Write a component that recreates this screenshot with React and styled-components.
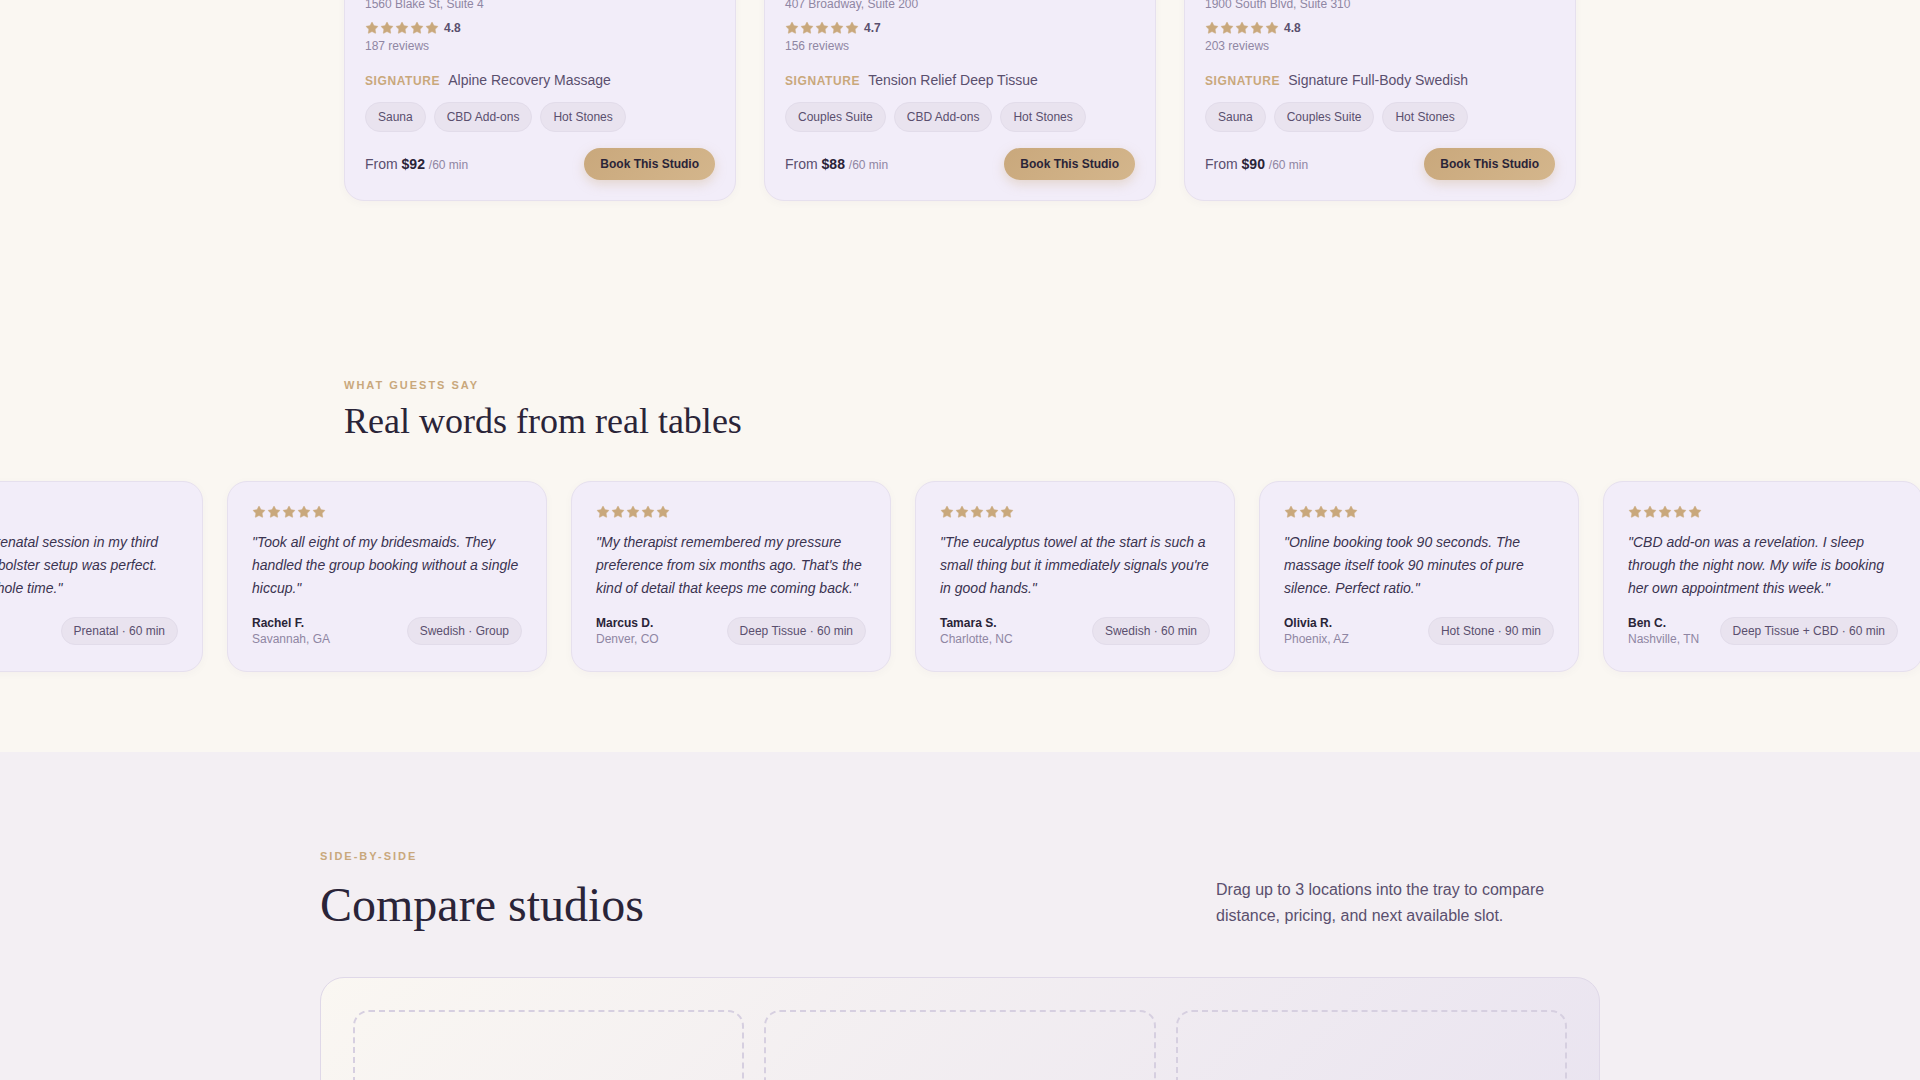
import React from 'react'
import styled, { createGlobalStyle } from 'styled-components'
import { Star } from 'lucide-react'

const GlobalStyle = createGlobalStyle`
    * {
        box-sizing: border-box;
    }

    html, body {
        margin: 0;
        padding: 0;
        background: #faf7f2;
        overflow: hidden;
    }

    body {
        font-family: "Liberation Sans", Arial, sans-serif;
        color: #2a2438;
    }
`

const Page = styled.div`
    height: 1080px;
    overflow: hidden;
`

const StudiosSection = styled.section`
    padding-bottom: 177px;
`

const StudioGrid = styled.div`
    width: 1232px;
    margin: -25px auto 0;
    display: grid;
    grid-template-columns: repeat(3, 392px);
    gap: 28px;
`

const StudioCard = styled.article`
    background: #f2edf9;
    border: 1px solid #e6e0ee;
    border-radius: 20px;
    padding: 20px;
    box-shadow: 0 2px 10px rgba(60, 40, 90, 0.03);
`

const Address = styled.div`
    font-size: 12px;
    line-height: 16px;
    color: #8f86a3;
`

const RatingRow = styled.div`
    display: flex;
    align-items: center;
    gap: 5px;
    margin-top: 8px;
    height: 16px;
`

const StarRow = styled.span`
    display: flex;
    align-items: center;
    gap: 1px;
    height: ${props => props.$height || 14}px;
    color: #c9a87c;

    svg {
        flex: none;
        fill: currentColor;
    }
`

const RatingValue = styled.span`
    font-size: 12px;
    font-weight: 700;
    color: #5a4f6e;
`

const ReviewCount = styled.div`
    font-size: 12px;
    line-height: 14px;
    margin-top: 3px;
    color: #8f86a3;
`

const SignatureRow = styled.div`
    display: flex;
    align-items: baseline;
    gap: 8px;
    margin-top: 19px;
`

const SignatureTag = styled.span`
    font-size: 12px;
    font-weight: 700;
    letter-spacing: 0.6px;
    color: #c9a87c;
`

const SignatureName = styled.span`
    font-size: 14px;
    color: #5a4f6e;
`

const TagRow = styled.div`
    display: flex;
    gap: 8px;
    margin-top: 14px;
`

const Chip = styled.span`
    display: inline-flex;
    align-items: center;
    height: ${props => props.$height || 30}px;
    padding: 0 12px;
    background: #e9e3ef;
    border: 1px solid #e2dcea;
    border-radius: 999px;
    font-size: 12px;
    color: #5a4f6e;
    white-space: nowrap;
`

const CardFooter = styled.div`
    display: flex;
    align-items: center;
    justify-content: space-between;
    margin-top: 16px;
`

const Price = styled.div`
    font-size: 14px;
    color: #5a4f6e;

    strong {
        color: #2a2438;
        font-weight: 700;
    }

    small {
        font-size: 12px;
        color: #8f86a3;
    }
`

const BookButton = styled.button`
    height: 32px;
    padding: 0 16px;
    border: none;
    border-radius: 999px;
    background: linear-gradient(135deg, #c9a87c, #d4b68c);
    box-shadow: 0 4px 12px rgba(201, 168, 124, 0.35);
    font-family: inherit;
    font-size: 12px;
    font-weight: 700;
    color: #2a2438;
`

const SectionHead = styled.div`
    width: 1232px;
    margin: 0 auto 38px;
`

const Eyebrow = styled.div`
    font-size: 11px;
    line-height: 14px;
    font-weight: 700;
    letter-spacing: 2px;
    text-transform: uppercase;
    color: #c9a87c;
`

const Heading = styled.h2`
    margin: 8px 0 0;
    font-family: "Liberation Serif", "Times New Roman", serif;
    font-weight: 400;
    font-size: 36px;
    line-height: 1.2;
    color: #2a2438;
`

const TestimonialSection = styled.section`
    padding-bottom: 80px;
    overflow: hidden;
`

const Track = styled.div`
    display: flex;
    gap: 24px;
    width: max-content;
    transform: translateX(-117px);
`

const QuoteCard = styled.article`
    flex: none;
    width: 320px;
    background: #f2edf9;
    border: 1px solid #e6e0ee;
    border-radius: 20px;
    padding: 24px;
    box-shadow: 0 2px 10px rgba(60, 40, 90, 0.03);
`

const Quote = styled.p`
    margin: 13px 0 15px;
    font-size: 14px;
    line-height: 23px;
    font-style: italic;
    color: #3a3350;
`

const QuoteFooter = styled.div`
    display: flex;
    align-items: center;
    justify-content: space-between;
    gap: 8px;
`

const Guest = styled.div`
    font-size: 12px;
    line-height: 16px;
    color: #8f86a3;
    white-space: nowrap;

    strong {
        display: block;
        color: #2a2438;
        font-weight: 700;
    }
`

const CompareSection = styled.section`
    background: #f3eff3;
    padding: 97px 0 80px;
`

const CompareHead = styled.div`
    width: 1280px;
    margin: 0 auto 43px;
    display: flex;
    align-items: flex-end;
    justify-content: space-between;
`

const CompareHeading = styled(Heading)`
    font-size: 48px;
    margin-top: 13px;
`

const CompareIntro = styled.p`
    margin: 0 0 5px;
    width: 384px;
    font-size: 16px;
    line-height: 26px;
    color: #5a4f6e;
`

const Tray = styled.div`
    width: 1280px;
    margin: 0 auto;
    display: grid;
    grid-template-columns: repeat(3, 1fr);
    gap: 20px;
    padding: 32px;
    background: linear-gradient(135deg, #faf7f2, #e8e2f0);
    border: 1px solid #dfd8e8;
    border-radius: 24px;
`

const TraySlot = styled.div`
    height: 220px;
    border: 2px dashed #d6cfe0;
    border-radius: 16px;
`

const studios = [
    { address: '1560 Blake St, Suite 4', rating: '4.8', reviews: 187, signature: 'Alpine Recovery Massage', tags: ['Sauna', 'CBD Add-ons', 'Hot Stones'], price: 92 },
    { address: '407 Broadway, Suite 200', rating: '4.7', reviews: 156, signature: 'Tension Relief Deep Tissue', tags: ['Couples Suite', 'CBD Add-ons', 'Hot Stones'], price: 88 },
    { address: '1900 South Blvd, Suite 310', rating: '4.8', reviews: 203, signature: 'Signature Full-Body Swedish', tags: ['Sauna', 'Couples Suite', 'Hot Stones'], price: 90 },
]

const quotes = [
    { text: '"Booked the prenatal session in my third trimester. The bolster setup was perfect. Relaxed the whole time."', name: 'Hannah L.', place: 'Austin, TX', service: 'Prenatal · 60 min' },
    { text: '"Took all eight of my bridesmaids. They handled the group booking without a single hiccup."', name: 'Rachel F.', place: 'Savannah, GA', service: 'Swedish · Group' },
    { text: '"My therapist remembered my pressure preference from six months ago. That\'s the kind of detail that keeps me coming back."', name: 'Marcus D.', place: 'Denver, CO', service: 'Deep Tissue · 60 min' },
    { text: '"The eucalyptus towel at the start is such a small thing but it immediately signals you\'re in good hands."', name: 'Tamara S.', place: 'Charlotte, NC', service: 'Swedish · 60 min' },
    { text: '"Online booking took 90 seconds. The massage itself took 90 minutes of pure silence. Perfect ratio."', name: 'Olivia R.', place: 'Phoenix, AZ', service: 'Hot Stone · 90 min' },
    { text: '"CBD add-on was a revelation. I sleep through the night now. My wife is booking her own appointment this week."', name: 'Ben C.', place: 'Nashville, TN', service: 'Deep Tissue + CBD · 60 min' },
]

function FiveStars({ height }) {
    return (
        <StarRow $height={height}>
            {[1, 2, 3, 4, 5].map(n => <Star key={n} size={14} strokeWidth={0.8} />)}
        </StarRow>
    )
}

export default function App() {
    return (
        <Page>
            <GlobalStyle />
            <StudiosSection>
                <StudioGrid>
                    {studios.map(studio => (
                        <StudioCard key={studio.address}>
                            <Address>{studio.address}</Address>
                            <RatingRow>
                                <FiveStars />
                                <RatingValue>{studio.rating}</RatingValue>
                            </RatingRow>
                            <ReviewCount>{studio.reviews} reviews</ReviewCount>
                            <SignatureRow>
                                <SignatureTag>SIGNATURE</SignatureTag>
                                <SignatureName>{studio.signature}</SignatureName>
                            </SignatureRow>
                            <TagRow>
                                {studio.tags.map(tag => <Chip key={tag}>{tag}</Chip>)}
                            </TagRow>
                            <CardFooter>
                                <Price>From <strong>${studio.price}</strong> <small>/60 min</small></Price>
                                <BookButton>Book This Studio</BookButton>
                            </CardFooter>
                        </StudioCard>
                    ))}
                </StudioGrid>
            </StudiosSection>

            <TestimonialSection>
                <SectionHead>
                    <Eyebrow>What guests say</Eyebrow>
                    <Heading>Real words from real tables</Heading>
                </SectionHead>
                <Track>
                    {quotes.map(quote => (
                        <QuoteCard key={quote.name}>
                            <FiveStars height={12} />
                            <Quote>{quote.text}</Quote>
                            <QuoteFooter>
                                <Guest>
                                    <strong>{quote.name}</strong>
                                    {quote.place}
                                </Guest>
                                <Chip $height={28}>{quote.service}</Chip>
                            </QuoteFooter>
                        </QuoteCard>
                    ))}
                </Track>
            </TestimonialSection>

            <CompareSection>
                <CompareHead>
                    <div>
                        <Eyebrow>Side-by-side</Eyebrow>
                        <CompareHeading>Compare studios</CompareHeading>
                    </div>
                    <CompareIntro>Drag up to 3 locations into the tray to compare distance, pricing, and next available slot.</CompareIntro>
                </CompareHead>
                <Tray>
                    <TraySlot />
                    <TraySlot />
                    <TraySlot />
                </Tray>
            </CompareSection>
        </Page>
    )
}
